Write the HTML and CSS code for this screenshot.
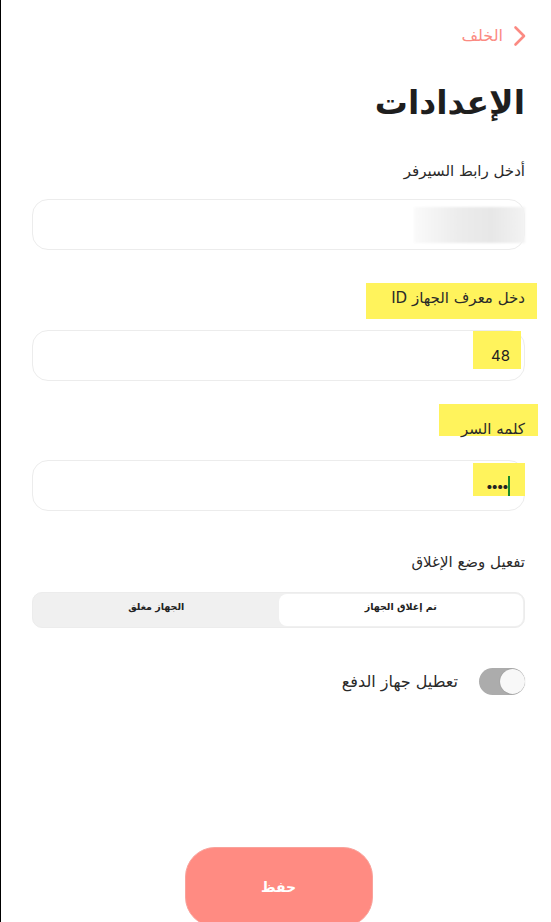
FILE: index.html
```html
<!DOCTYPE html>
<html lang="ar" dir="rtl">
<head>
<meta charset="utf-8">
<title>الإعدادات</title>
<link rel="stylesheet" href="styles.css">
</head>
<body>
<div class="page">
  <div class="back">
    <svg class="chev" width="14" height="22" viewBox="0 0 14 22"><path d="M2.5 2.5 L11 11 L2.5 19.5" fill="none" stroke="#fb8a82" stroke-width="2.6" stroke-linecap="round" stroke-linejoin="round"/></svg>
    <span class="back-text">الخلف</span>
  </div>
  <h1 class="title">الإعدادات</h1>

  <div class="label label-1">أدخل رابط السيرفر</div>
  <div class="input"><span class="blur"></span></div>

  <div class="label label-2"><span class="hl hl-2"></span><span class="txt">دخل معرف الجهاز ID</span></div>
  <div class="input"><span class="hl hl-in"></span><span class="val">48</span></div>

  <div class="label label-3"><span class="hl hl-3"></span><span class="txt">كلمه السر</span></div>
  <div class="input"><span class="hl hl-in hl-in3"></span><span class="caret"></span><span class="val dots">••••</span></div>

  <div class="label label-4">تفعيل وضع الإغلاق</div>
  <div class="seg">
    <div class="seg-item active">تم إغلاق الجهاز</div>
    <div class="seg-item">الجهاز مغلق</div>
  </div>

  <div class="toggle-row">
    <div class="switch"><span class="knob"></span></div>
    <span class="toggle-text">تعطيل جهاز الدفع</span>
  </div>

  <div class="btn-wrap"><button class="save">حفظ</button></div>
</div>
</body>
</html>
```

FILE: styles.css
```css
html, body {
  margin: 0;
  padding: 0;
  height: 100%;
  overflow: hidden;
  background: #fff;
}
body {
  border-left: 1px solid #000;
  box-sizing: border-box;
  font-family: "DejaVu Sans", sans-serif;
  color: #222;
}
.page {
  padding: 25px 26px 0 31px;
  display: flex;
  flex-direction: column;
}
.back {
  display: flex;
  align-items: center;
  gap: 10px;
  height: 22px;
  color: #fb8a82;
}
.chev { display: block; margin-right: -2px; }
.back-text { font-size: 16px; line-height: 22px; }
.title {
  margin: 36px 0 0;
  font-size: 33px;
  line-height: 40px;
  font-weight: bold;
  color: #1e1e1e;
}
.label {
  position: relative;
  font-size: 15px;
  line-height: 20px;
  color: #2a2a2a;
}
.label .txt { position: relative; }
.label-1 { margin-top: 38px; }
.label-2 { margin-top: 38px; }
.label-3 { margin-top: 38px; }
.label-4 { margin-top: 41px; }
.hl {
  position: absolute;
  background: #fff35c;
}
.hl-2 { right: -12px; left: 334px; top: -5px; height: 36px; }
.hl-3 { right: -13px; left: 407px; top: -15px; height: 32px; }
.input {
  position: relative;
  margin-top: 18px;
  height: 49px;
  border: 1px solid #ececec;
  border-radius: 16px;
  display: flex;
  align-items: center;
  padding: 0 14px;
}
.label-1 + .input { margin-top: 18px; }
.label-2 + .input { margin-top: 22px; }
.label-3 + .input { margin-top: 21px; }
.blur {
  position: absolute;
  right: -1px;
  top: 7px;
  width: 111px;
  height: 36px;
  background: linear-gradient(90deg, #fafafa 0%, #ececec 40%, #e7e7e7 70%, #f3f3f3 100%);
  filter: blur(1px);
}
.hl-in { right: 3px; top: 0; width: 48px; height: 38px; }
.hl-in3 { right: -1px; top: 2px; width: 52px; height: 33px; }
.val { position: relative; font-family: Inter, "DejaVu Sans", sans-serif; font-size: 15px; color: #222; }
.dots { font-size: 13px; letter-spacing: -2px; margin-right: 1px; }
.caret {
  position: relative;
  display: block;
  flex-shrink: 0;
  width: 2px;
  height: 20px;
  background: #1a8a2a;
}
.seg {
  margin-top: 20px;
  height: 32px;
  padding: 1px;
  background: #f0f0f0;
  border: 1px solid #ececec;
  border-radius: 10px;
  display: flex;
}
.seg-item {
  flex: 1;
  display: flex;
  align-items: center;
  justify-content: center;
  font-size: 9.5px;
  font-weight: bold;
  color: #222;
  border-radius: 8px;
  padding-bottom: 8px;
}
.seg-item.active { background: #fff; }
.toggle-row {
  margin-top: 40px;
  display: flex;
  align-items: center;
  gap: 21px;
}
.switch {
  width: 46px;
  height: 27px;
  border-radius: 14px;
  background: #acacac;
  position: relative;
  box-sizing: border-box;
}
.knob {
  position: absolute;
  left: 21px;
  top: 1px;
  width: 25px;
  height: 25px;
  border-radius: 50%;
  background: #f8f8f8;
  box-shadow: 0 0 1px rgba(0,0,0,0.3);
}
.toggle-text { font-size: 16px; color: #2a2a2a; }
.btn-wrap {
  margin-top: 152px;
  display: flex;
  justify-content: center;
}
.save {
  width: 188px;
  height: 80px;
  border-radius: 30px;
  border: 1px solid #f9a29b;
  background: #ff8b82;
  color: #fff;
  font-family: "DejaVu Sans", sans-serif;
  font-size: 14px;
  font-weight: bold;
}
```
